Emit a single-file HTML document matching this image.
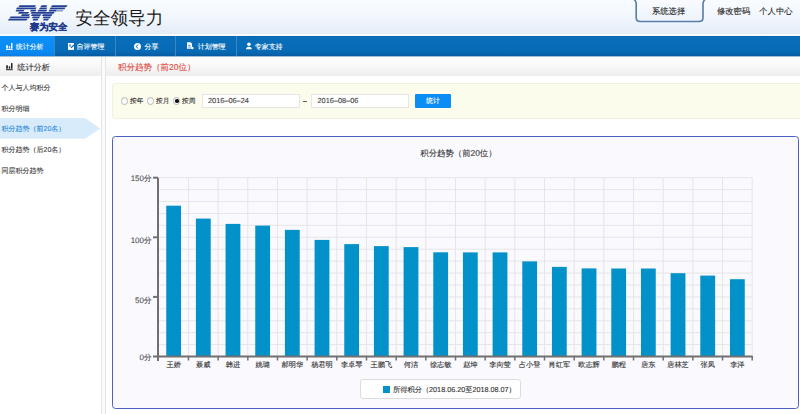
<!DOCTYPE html>
<html><head><meta charset="utf-8">
<style>
*{margin:0;padding:0;box-sizing:border-box}
html,body{width:800px;height:414px;overflow:hidden;background:#fff;font-family:"Liberation Sans",sans-serif;color:#333;text-rendering:geometricPrecision}
.a{-webkit-text-stroke:0.12px currentColor}
.a{position:absolute;white-space:nowrap}
#hdr{left:0;top:0;width:800px;height:35px;background:linear-gradient(#f9fcff,#f2f7fd 50%,#e2ebf6)}
#hline{left:0;top:34px;width:800px;height:2px;background:#f7fafd}
#nav{left:0;top:36px;width:800px;height:20.3px;background:linear-gradient(#0a62ac,#086fbb 8%,#086ab5 75%,#0762ab 92%,#055a9f)}
.tab{top:38px;height:20px;color:#fff;font-size:6.95px;line-height:20px}
.sep{top:36px;width:1px;height:20px;background:#3d86c2}
#act{left:0;top:36px;width:54px;height:20px;background:linear-gradient(#0c90fa,#0a89f2 80%,#0a7fe4)}
.title{left:75.3px;top:7.2px;font-size:17.6px;color:#1a1a1a;line-height:22px;-webkit-text-stroke:0}
.hl{top:5.8px;font-size:8.3px;color:#2a2a2a;line-height:10px}
#sysbtn{left:635px;top:-4px;width:69px;height:26px;border:1.5px solid #5f82aa;border-radius:5px;background:linear-gradient(#f7faff,#eaf1f9)}
.side{left:1.5px;font-size:7px;color:#444;line-height:10px}

.radio{width:7.4px;height:7.4px;border:1px solid #b8b8b8;border-radius:50%;background:linear-gradient(#f4f4f4,#fff)}
.fl{top:97.3px;font-size:6.7px;color:#333;line-height:10px}
.inp{top:94px;width:98px;height:14px;background:#fff;border:1px solid #e6e6e6}
.fd{top:95.9px;font-size:7.35px;color:#444;line-height:10px}
.yl{right:648.3px;font-size:7.9px;color:#555;line-height:10px;text-align:right}
.xl{top:360.2px;width:40px;text-align:center;font-size:7.2px;color:#333;line-height:10px}
</style></head><body>
<div class="a" id="hdr"></div>
<div class="a" id="hline"></div>
<!-- logo -->
<svg class="a" style="left:0;top:0" width="75" height="34" viewBox="0 0 75 34"><g fill="#233f93"><polygon points="19.55,5.35 36.05,5.35 34.95,6.95 18.45,6.95"/><polygon points="41.55,5.35 47.30,5.35 46.20,6.95 40.45,6.95"/><polygon points="52.05,5.35 67.55,5.35 66.45,6.95 50.95,6.95"/><polygon points="17.05,7.60 36.55,7.60 35.45,9.20 15.95,9.20"/><polygon points="40.05,7.60 47.30,7.60 46.20,9.20 38.95,9.20"/><polygon points="50.55,7.60 65.55,7.60 64.45,9.20 49.45,9.20"/><polygon points="16.55,9.85 24.55,9.85 23.45,11.45 15.45,11.45"/><polygon points="31.05,9.85 36.55,9.85 35.45,11.45 29.95,11.45"/><polygon points="38.55,9.85 47.30,9.85 46.20,11.45 37.45,11.45"/><polygon points="49.55,9.85 57.05,9.85 55.95,11.45 48.45,11.45"/><polygon points="19.05,12.10 29.05,12.10 27.95,13.70 17.95,13.70"/><polygon points="31.55,12.10 54.55,12.10 53.45,13.70 30.45,13.70"/><polygon points="22.05,14.35 30.05,14.35 28.95,15.95 20.95,15.95"/><polygon points="32.05,14.35 41.30,14.35 40.20,15.95 30.95,15.95"/><polygon points="43.05,14.35 52.55,14.35 51.45,15.95 41.95,15.95"/><polygon points="10.55,16.60 30.05,16.60 28.95,18.20 9.45,18.20"/><polygon points="32.80,16.60 40.05,16.60 38.95,18.20 31.70,18.20"/><polygon points="43.55,16.60 51.05,16.60 49.95,18.20 42.45,18.20"/><polygon points="9.05,18.85 27.55,18.85 26.45,20.45 7.95,20.45"/><polygon points="33.55,18.85 38.55,18.85 37.45,20.45 32.45,20.45"/><polygon points="44.05,18.85 49.05,18.85 47.95,20.45 42.95,20.45"/></g><polygon fill="#8a9ccc" points="56.5,9.85 63.5,9.85 62.5,11.45 55.5,11.45"/><text x="29.8" y="30.2" font-weight="bold" font-size="9.2" fill="#1e3a8c" stroke="#1e3a8c" stroke-width="0.25" textLength="37.5" lengthAdjust="spacingAndGlyphs">赛为安全</text></svg>
<div class="a title">安全领导力</div>
<svg class="a" style="left:620px;top:0" width="100" height="26" viewBox="620 0 100 26"><defs><linearGradient id="bg1" x1="0" y1="0" x2="0" y2="1"><stop offset="0" stop-color="#f9fbff"/><stop offset="1" stop-color="#edf3fa"/></linearGradient></defs><path d="M634.2,-0.5 Q636.2,1.5 636.2,3.5 V17.4 Q636.2,21.5 640.3,21.5 H699 Q703,21.5 703,17.4 V3.5 Q703,1.5 705,-0.5" fill="url(#bg1)" stroke="#587ca8" stroke-width="1.6"/></svg>
<div class="a hl" style="left:652px">系统选择</div>
<div class="a hl" style="left:717px">修改密码</div>
<div class="a hl" style="left:759.3px">个人中心</div>

<div class="a" id="nav"></div>
<div class="a" id="act"></div>
<div class="a" style="left:0;top:56px;width:800px;height:1px;background:#9dbfdf"></div>
<div class="a sep" style="left:54px"></div>
<div class="a sep" style="left:115px"></div>
<div class="a sep" style="left:175px"></div>
<div class="a sep" style="left:236px"></div>
<div class="a tab" style="left:15.8px">统计分析</div>
<div class="a tab" style="left:76.6px">自评管理</div>
<div class="a tab" style="left:144.5px">分享</div>
<div class="a tab" style="left:197.8px">计划管理</div>
<div class="a tab" style="left:254.8px">专家支持</div>
<svg class="a" style="left:0;top:36px" width="300" height="20" viewBox="0 36 300 20">
 <g fill="#fff">
  <rect x="6.2" y="45.2" width="1.7" height="3.4"/><rect x="8.8" y="46.2" width="1.4" height="2.4"/><rect x="11" y="43" width="1.5" height="5.6"/><rect x="6" y="49" width="6.8" height="0.9"/>
  <rect x="68" y="43" width="6" height="6.9"/>
  <circle cx="137.5" cy="46.4" r="3.5"/>
  <path d="M187 42.3h3.6l1.4 1.4v3.2h-1.2v1.8h-3.8z"/>
  <circle cx="192.3" cy="48" r="1.3"/>
  <circle cx="248.9" cy="44.3" r="1.8"/>
  <path d="M246 49.3c0-1.6 1-2.5 2.9-2.5s2.9 0.9 2.9 2.5z"/>
 </g>
 <g fill="#5d9fd6"><rect x="69.2" y="44.3" width="1.8" height="2.4"/></g>
 <g stroke="#0a6ab6" fill="none">
  <path d="M71 47.9l2.9-2.9" stroke-width="1.2"/>
  <path d="M135.9 46.5l2.4-1.9M135.9 46.5l2.4 1.9" stroke-width="0.9"/>
  <path d="M188.2 45.3h2.5M188.2 47h2.2" stroke-width="0.7"/>
 </g>
</svg>
<!-- sidebar -->
<div class="a" style="left:0;top:57px;width:101px;height:19.2px;background:linear-gradient(#fff,#f9f9f9 40%,#eeeeee)"></div>
<div class="a" style="left:17.2px;top:63px;font-size:8.2px;color:#333;line-height:10px">统计分析</div>
<svg class="a" style="left:0;top:56px" width="16" height="20" viewBox="0 56 16 20"><g fill="#222"><rect x="6.2" y="65.3" width="1.7" height="3.4"/><rect x="8.8" y="66.3" width="1.4" height="2.4"/><rect x="11" y="63.1" width="1.5" height="5.6"/><rect x="6" y="69.2" width="6.8" height="1"/></g></svg>
<div class="a side" style="top:84px">个人与人均积分</div>
<div class="a side" style="top:105px">积分明细</div>
<svg class="a" style="left:0;top:118px" width="102" height="21"><polygon points="0,0.1 84.9,0.1 100.3,10.6 84.9,20.75 0,20.75" fill="#d8ebfa"/></svg>
<div class="a side" style="top:125.2px;color:#2f8be0">积分趋势（前20名）</div>
<div class="a side" style="top:146.3px">积分趋势（后20名）</div>
<div class="a side" style="top:167px">同层积分趋势</div>
<div class="a" style="left:101px;top:57px;width:5px;height:358px;border-left:1px solid #e4e4e4;border-right:1px solid #e4e4e4;background:#fbfbfb"></div>

<!-- content header -->
<div class="a" style="left:106px;top:57px;width:694px;height:19.2px;background:linear-gradient(#fff,#f9f9f9 40%,#eeeeee)"></div>
<div class="a" style="left:118px;top:62px;font-size:8.5px;color:#e0463c;line-height:10px">积分趋势（前20位）</div>

<!-- filter box -->
<div class="a" style="left:112px;top:83px;width:700px;height:36px;background:#fbfceb;border:1px solid #f0f2e0;border-radius:3px"></div>


<!-- filter controls -->
<div class="a radio" style="left:120.5px;top:97.2px"></div>
<div class="a fl" style="left:130px">按年</div>
<div class="a radio" style="left:146.5px;top:97.2px"></div>
<div class="a fl" style="left:156px">按月</div>
<div class="a radio" style="left:173px;top:97.2px"><div style="position:absolute;left:1.1px;top:1.1px;width:3.6px;height:3.6px;border-radius:50%;background:#111"></div></div>
<div class="a fl" style="left:182px">按周</div>
<div class="a inp" style="left:201.5px"></div>
<div class="a fd" style="left:208px">2016–06–24</div>
<div class="a" style="left:303.3px;top:100.8px;width:4px;height:0.9px;background:#666"></div>
<div class="a inp" style="left:311px"></div>
<div class="a fd" style="left:317.5px">2016–08–06</div>
<div class="a" style="left:415px;top:94px;width:36px;height:14px;background:#0b8df6;border-radius:1px"></div>
<div class="a" style="left:426px;top:97px;font-size:7px;color:#fff;line-height:10px">统计</div>
<!-- chart panel -->
<div class="a" style="left:111.7px;top:136.3px;width:687.4px;height:273.2px;background:#f9f9fe;border:1.8px solid #4d60c0;border-radius:3.5px"></div>
<div class="a" style="left:420.3px;top:148.4px;font-size:8.4px;color:#333;line-height:10px">积分趋势（前20位）</div>
<svg class="a" style="left:0;top:0" width="800" height="414">
<line x1="159" y1="177.70" x2="752" y2="177.70" stroke="#e6e6e8" stroke-width="1"/>
<line x1="159" y1="189.62" x2="752" y2="189.62" stroke="#e6e6e8" stroke-width="1"/>
<line x1="159" y1="201.54" x2="752" y2="201.54" stroke="#e6e6e8" stroke-width="1"/>
<line x1="159" y1="213.46" x2="752" y2="213.46" stroke="#e6e6e8" stroke-width="1"/>
<line x1="159" y1="225.38" x2="752" y2="225.38" stroke="#e6e6e8" stroke-width="1"/>
<line x1="159" y1="237.30" x2="752" y2="237.30" stroke="#e6e6e8" stroke-width="1"/>
<line x1="159" y1="249.22" x2="752" y2="249.22" stroke="#e6e6e8" stroke-width="1"/>
<line x1="159" y1="261.14" x2="752" y2="261.14" stroke="#e6e6e8" stroke-width="1"/>
<line x1="159" y1="273.06" x2="752" y2="273.06" stroke="#e6e6e8" stroke-width="1"/>
<line x1="159" y1="284.98" x2="752" y2="284.98" stroke="#e6e6e8" stroke-width="1"/>
<line x1="159" y1="296.90" x2="752" y2="296.90" stroke="#e6e6e8" stroke-width="1"/>
<line x1="159" y1="308.82" x2="752" y2="308.82" stroke="#e6e6e8" stroke-width="1"/>
<line x1="159" y1="320.74" x2="752" y2="320.74" stroke="#e6e6e8" stroke-width="1"/>
<line x1="159" y1="332.66" x2="752" y2="332.66" stroke="#e6e6e8" stroke-width="1"/>
<line x1="159" y1="344.58" x2="752" y2="344.58" stroke="#e6e6e8" stroke-width="1"/>
<line x1="188.47" y1="177.7" x2="188.47" y2="356" stroke="#e6e6e8" stroke-width="1"/>
<line x1="218.14" y1="177.7" x2="218.14" y2="356" stroke="#e6e6e8" stroke-width="1"/>
<line x1="247.81" y1="177.7" x2="247.81" y2="356" stroke="#e6e6e8" stroke-width="1"/>
<line x1="277.48" y1="177.7" x2="277.48" y2="356" stroke="#e6e6e8" stroke-width="1"/>
<line x1="307.15" y1="177.7" x2="307.15" y2="356" stroke="#e6e6e8" stroke-width="1"/>
<line x1="336.82" y1="177.7" x2="336.82" y2="356" stroke="#e6e6e8" stroke-width="1"/>
<line x1="366.49" y1="177.7" x2="366.49" y2="356" stroke="#e6e6e8" stroke-width="1"/>
<line x1="396.16" y1="177.7" x2="396.16" y2="356" stroke="#e6e6e8" stroke-width="1"/>
<line x1="425.83" y1="177.7" x2="425.83" y2="356" stroke="#e6e6e8" stroke-width="1"/>
<line x1="455.50" y1="177.7" x2="455.50" y2="356" stroke="#e6e6e8" stroke-width="1"/>
<line x1="485.17" y1="177.7" x2="485.17" y2="356" stroke="#e6e6e8" stroke-width="1"/>
<line x1="514.84" y1="177.7" x2="514.84" y2="356" stroke="#e6e6e8" stroke-width="1"/>
<line x1="544.51" y1="177.7" x2="544.51" y2="356" stroke="#e6e6e8" stroke-width="1"/>
<line x1="574.18" y1="177.7" x2="574.18" y2="356" stroke="#e6e6e8" stroke-width="1"/>
<line x1="603.85" y1="177.7" x2="603.85" y2="356" stroke="#e6e6e8" stroke-width="1"/>
<line x1="633.52" y1="177.7" x2="633.52" y2="356" stroke="#e6e6e8" stroke-width="1"/>
<line x1="663.19" y1="177.7" x2="663.19" y2="356" stroke="#e6e6e8" stroke-width="1"/>
<line x1="692.86" y1="177.7" x2="692.86" y2="356" stroke="#e6e6e8" stroke-width="1"/>
<line x1="722.53" y1="177.7" x2="722.53" y2="356" stroke="#e6e6e8" stroke-width="1"/>
<line x1="752.20" y1="177.7" x2="752.20" y2="356" stroke="#e6e6e8" stroke-width="1"/>
<rect x="166.24" y="205.70" width="14.8" height="150.30" fill="#0391c9"/>
<rect x="195.91" y="218.60" width="14.8" height="137.40" fill="#0391c9"/>
<rect x="225.58" y="223.90" width="14.8" height="132.10" fill="#0391c9"/>
<rect x="255.25" y="225.60" width="14.8" height="130.40" fill="#0391c9"/>
<rect x="284.92" y="229.90" width="14.8" height="126.10" fill="#0391c9"/>
<rect x="314.59" y="239.90" width="14.8" height="116.10" fill="#0391c9"/>
<rect x="344.26" y="244.10" width="14.8" height="111.90" fill="#0391c9"/>
<rect x="373.93" y="246.10" width="14.8" height="109.90" fill="#0391c9"/>
<rect x="403.60" y="247.10" width="14.8" height="108.90" fill="#0391c9"/>
<rect x="433.27" y="252.30" width="14.8" height="103.70" fill="#0391c9"/>
<rect x="462.94" y="252.40" width="14.8" height="103.60" fill="#0391c9"/>
<rect x="492.61" y="252.40" width="14.8" height="103.60" fill="#0391c9"/>
<rect x="522.27" y="261.40" width="14.8" height="94.60" fill="#0391c9"/>
<rect x="551.94" y="266.90" width="14.8" height="89.10" fill="#0391c9"/>
<rect x="581.62" y="268.40" width="14.8" height="87.60" fill="#0391c9"/>
<rect x="611.28" y="268.50" width="14.8" height="87.50" fill="#0391c9"/>
<rect x="640.95" y="268.50" width="14.8" height="87.50" fill="#0391c9"/>
<rect x="670.62" y="273.20" width="14.8" height="82.80" fill="#0391c9"/>
<rect x="700.30" y="275.60" width="14.8" height="80.40" fill="#0391c9"/>
<rect x="729.96" y="279.20" width="14.8" height="76.80" fill="#0391c9"/>
<line x1="158" y1="177.7" x2="158" y2="361" stroke="#707070" stroke-width="2"/>
<line x1="153" y1="356.5" x2="752.5" y2="356.5" stroke="#707070" stroke-width="2"/>
<line x1="153" y1="177.7" x2="158" y2="177.7" stroke="#707070" stroke-width="2"/>
<line x1="153" y1="237.3" x2="158" y2="237.3" stroke="#707070" stroke-width="2"/>
<line x1="153" y1="296.9" x2="158" y2="296.9" stroke="#707070" stroke-width="2"/>
<line x1="188.47" y1="356" x2="188.47" y2="360.5" stroke="#707070" stroke-width="1.5"/>
<line x1="218.14" y1="356" x2="218.14" y2="360.5" stroke="#707070" stroke-width="1.5"/>
<line x1="247.81" y1="356" x2="247.81" y2="360.5" stroke="#707070" stroke-width="1.5"/>
<line x1="277.48" y1="356" x2="277.48" y2="360.5" stroke="#707070" stroke-width="1.5"/>
<line x1="307.15" y1="356" x2="307.15" y2="360.5" stroke="#707070" stroke-width="1.5"/>
<line x1="336.82" y1="356" x2="336.82" y2="360.5" stroke="#707070" stroke-width="1.5"/>
<line x1="366.49" y1="356" x2="366.49" y2="360.5" stroke="#707070" stroke-width="1.5"/>
<line x1="396.16" y1="356" x2="396.16" y2="360.5" stroke="#707070" stroke-width="1.5"/>
<line x1="425.83" y1="356" x2="425.83" y2="360.5" stroke="#707070" stroke-width="1.5"/>
<line x1="455.50" y1="356" x2="455.50" y2="360.5" stroke="#707070" stroke-width="1.5"/>
<line x1="485.17" y1="356" x2="485.17" y2="360.5" stroke="#707070" stroke-width="1.5"/>
<line x1="514.84" y1="356" x2="514.84" y2="360.5" stroke="#707070" stroke-width="1.5"/>
<line x1="544.51" y1="356" x2="544.51" y2="360.5" stroke="#707070" stroke-width="1.5"/>
<line x1="574.18" y1="356" x2="574.18" y2="360.5" stroke="#707070" stroke-width="1.5"/>
<line x1="603.85" y1="356" x2="603.85" y2="360.5" stroke="#707070" stroke-width="1.5"/>
<line x1="633.52" y1="356" x2="633.52" y2="360.5" stroke="#707070" stroke-width="1.5"/>
<line x1="663.19" y1="356" x2="663.19" y2="360.5" stroke="#707070" stroke-width="1.5"/>
<line x1="692.86" y1="356" x2="692.86" y2="360.5" stroke="#707070" stroke-width="1.5"/>
<line x1="722.53" y1="356" x2="722.53" y2="360.5" stroke="#707070" stroke-width="1.5"/>
<line x1="752.20" y1="356" x2="752.20" y2="360.5" stroke="#707070" stroke-width="1.5"/>
</svg>

<div class="a yl" style="top:173.8px">150分</div>
<div class="a yl" style="top:236.3px">100分</div>
<div class="a yl" style="top:295.6px">50分</div>
<div class="a yl" style="top:352.6px">0分</div>
<div class="a xl" style="left:153.64px">王娇</div>
<div class="a xl" style="left:183.31px">聂威</div>
<div class="a xl" style="left:212.98px">韩进</div>
<div class="a xl" style="left:242.64px">姚璐</div>
<div class="a xl" style="left:272.31px">郝明华</div>
<div class="a xl" style="left:301.99px">杨君明</div>
<div class="a xl" style="left:331.66px">李卓琴</div>
<div class="a xl" style="left:361.32px">王鹏飞</div>
<div class="a xl" style="left:391.00px">何洁</div>
<div class="a xl" style="left:420.67px">徐志敏</div>
<div class="a xl" style="left:450.34px">赵坤</div>
<div class="a xl" style="left:480.00px">李向莹</div>
<div class="a xl" style="left:509.68px">占小登</div>
<div class="a xl" style="left:539.35px">肖红军</div>
<div class="a xl" style="left:569.02px">欧志辉</div>
<div class="a xl" style="left:598.69px">鹏程</div>
<div class="a xl" style="left:628.36px">唐东</div>
<div class="a xl" style="left:658.03px">唐林芝</div>
<div class="a xl" style="left:687.70px">张凤</div>
<div class="a xl" style="left:717.37px">李洋</div>
<div class="a" style="left:360px;top:378.6px;width:161px;height:20.6px;background:#fff;border:1px solid #dcdcdc;border-radius:3px"></div>
<div class="a" style="left:382.5px;top:386px;width:7.3px;height:7.3px;background:#0391c9"></div>
<div class="a" style="left:393px;top:385.1px;font-size:7.22px;color:#333;line-height:10px">所得积分（2018.06.20至2018.08.07）</div>

</body></html>
